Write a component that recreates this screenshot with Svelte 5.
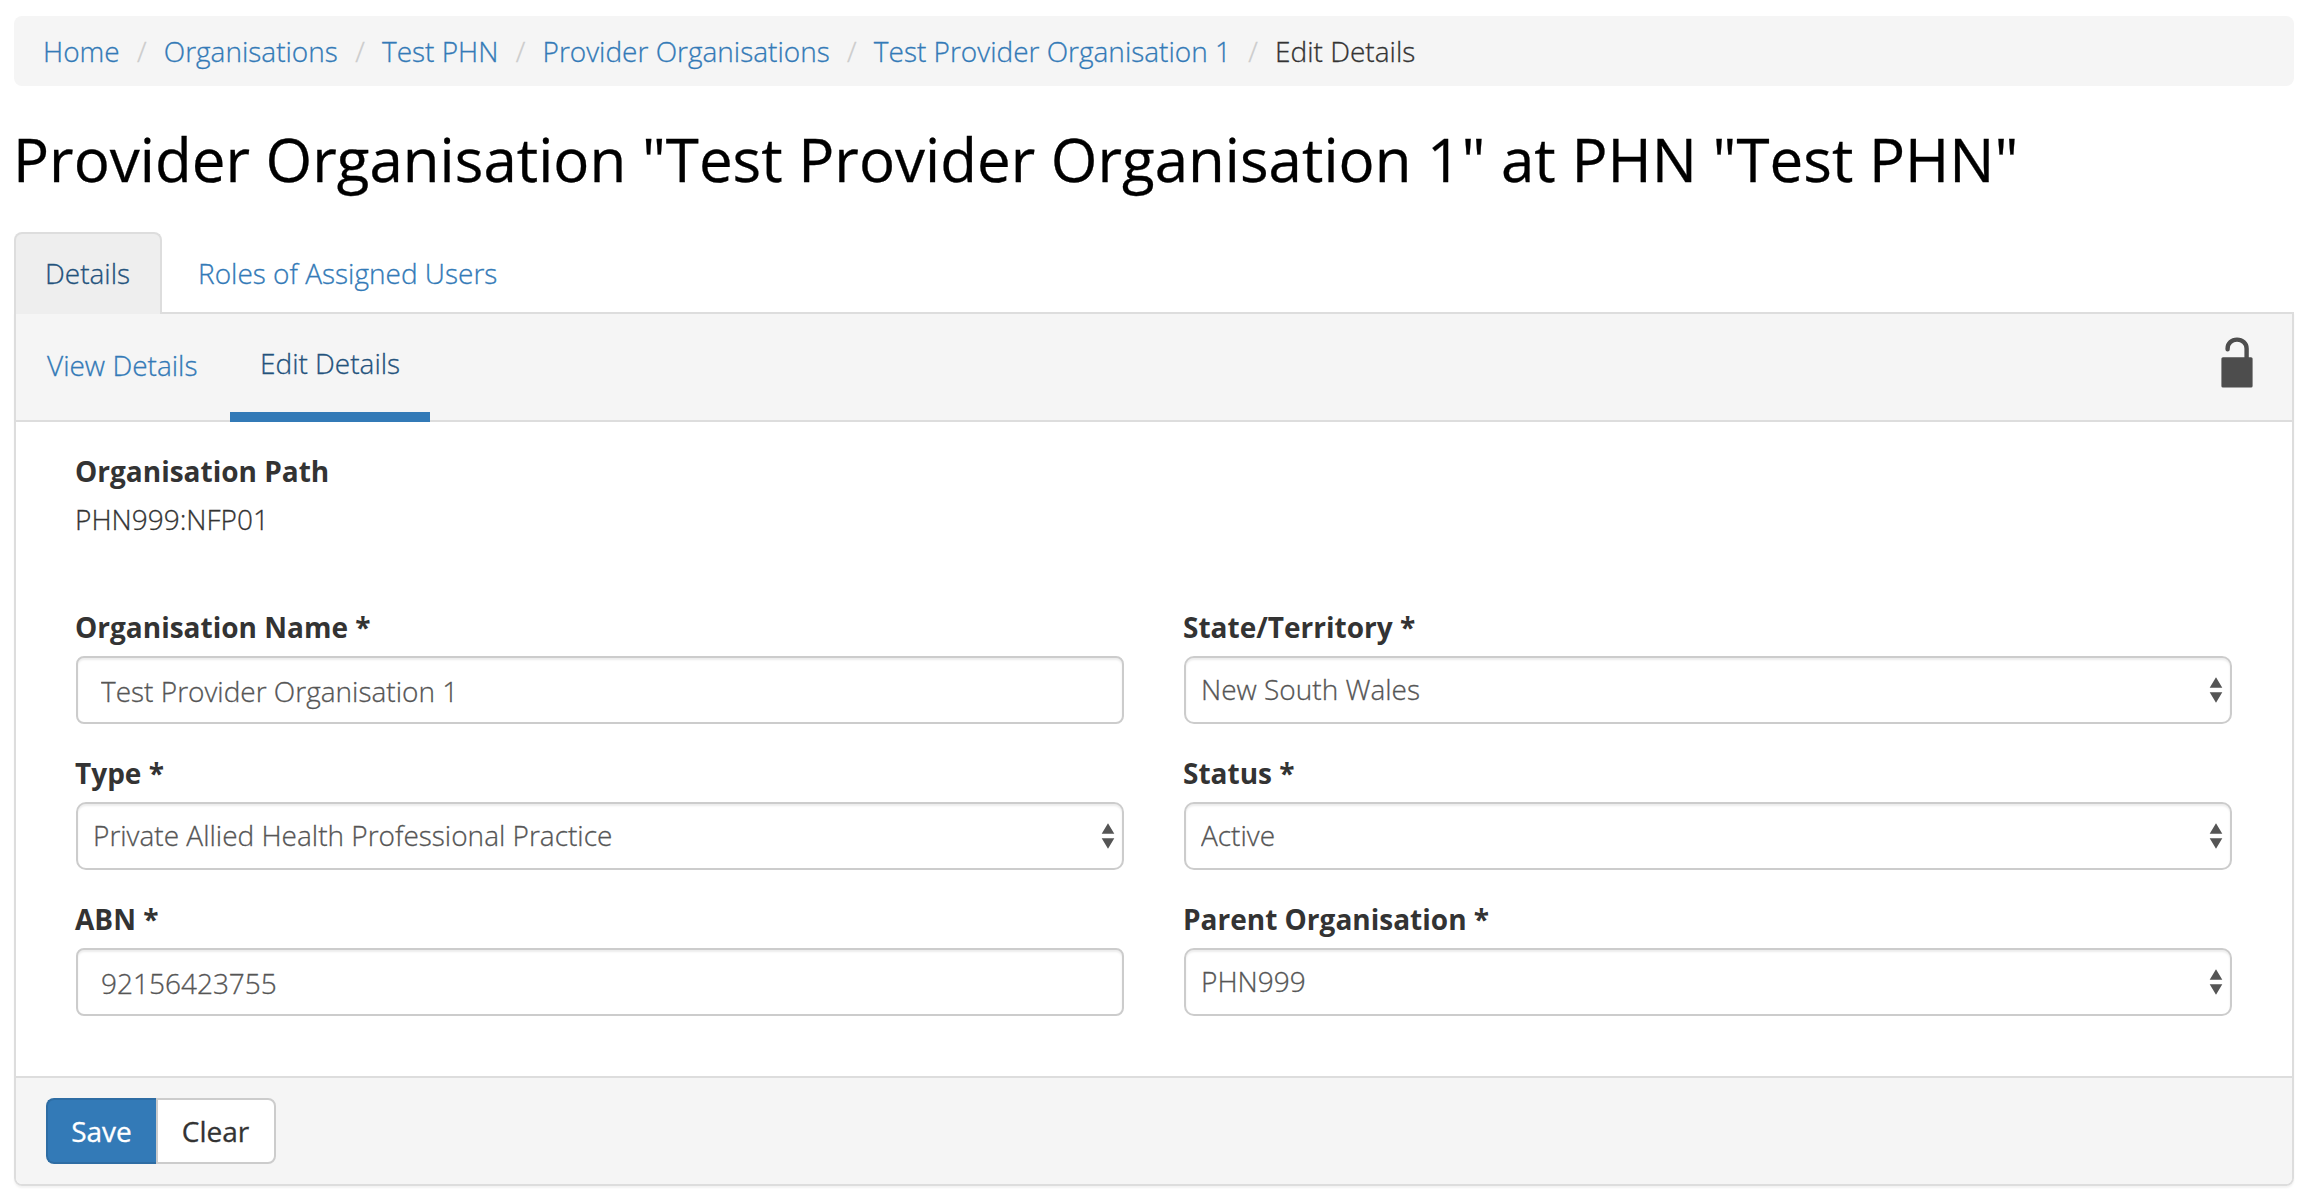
<script>
  const crumbs = ['Home', 'Organisations', 'Test PHN', 'Provider Organisations', 'Test Provider Organisation 1'];

  const fields = [
    { id: 'name', label: 'Organisation Name', kind: 'text', value: 'Test Provider Organisation 1' },
    { id: 'state', label: 'State/Territory', kind: 'select', value: 'New South Wales' },
    { id: 'type', label: 'Type', kind: 'select', value: 'Private Allied Health Professional Practice' },
    { id: 'status', label: 'Status', kind: 'select', value: 'Active' },
    { id: 'abn', label: 'ABN', kind: 'text', value: '92156423755' },
    { id: 'parent', label: 'Parent Organisation', kind: 'select', value: 'PHN999' }
  ];
</script>

<div class="page">
  <nav class="breadcrumb" aria-label="Breadcrumb">
    {#each crumbs as crumb}
      <a href="#top">{crumb}</a><span class="slash">/</span>
    {/each}
    <span class="current">Edit Details</span>
  </nav>

  <h1>Provider Organisation "Test Provider Organisation 1" at PHN "Test PHN"</h1>

  <div class="tabs">
    <a class="tab active" href="#details">Details</a>
    <a class="tab" href="#roles">Roles of Assigned Users</a>
  </div>

  <section class="panel">
    <header class="panel-head">
      <a class="sub view" href="#view">View Details</a>
      <a class="sub edit" href="#edit">Edit Details</a>
      <svg class="lock" viewBox="0 0 32 52" width="32" height="52" aria-label="Unlocked">
        <path d="M6.6 13.2V12.4C6.6 7.4 10.6 3.6 16 3.6S25.6 7.4 25.6 12.4V22" fill="none" stroke="#4d4d4d" stroke-width="4.4" stroke-linecap="round" />
        <rect x="0.4" y="21.2" width="31.2" height="30.4" rx="1.6" fill="#4d4d4d" />
      </svg>
    </header>

    <form class="body">
      <div class="path-label">Organisation Path</div>
      <div class="path-value">PHN999:NFP01</div>

      <div class="grid">
        {#each fields as field}
          <div class="field">
            <label for={field.id}>{field.label} *</label>
            {#if field.kind === 'text'}
              <input id={field.id} type="text" value={field.value} />
            {:else}
              <div class="select-wrap">
                <select id={field.id}>
                  <option>{field.value}</option>
                </select>
                <svg class="arrows" viewBox="0 0 14 26" width="14" height="26">
                  <path d="M7 0.2L13.3 10.8H0.7ZM7 25.8L13.3 15.2H0.7Z" fill="#555" />
                </svg>
              </div>
            {/if}
          </div>
        {/each}
      </div>
    </form>

    <footer class="panel-foot">
      <button class="save" type="button">Save</button>
      <button class="clear" type="button">Clear</button>
    </footer>
  </section>
</div>

<style>
  :global(body) {
    margin: 0;
    background: #fff;
  }

  .page {
    box-sizing: border-box;
    height: 1204px;
    padding: 16px 16px 0 14px;
    font-family: 'Open Sans', sans-serif;
    font-size: 28px;
    font-weight: 300;
    line-height: 38px;
    color: #333;
    -webkit-text-stroke-width: 0.3px;
  }

  .page * {
    box-sizing: border-box;
  }

  a {
    color: #337ab7;
    text-decoration: none;
  }

  .breadcrumb {
    display: flex;
    height: 70px;
    padding: 16px 29px;
    border-radius: 8px;
    background: #f5f5f5;
    white-space: nowrap;
  }

  .slash {
    width: 44.1px;
    text-align: center;
    color: #ccc;
  }

  h1 {
    height: 66px;
    margin: 40px 0 40px -1px;
    font-size: 60px;
    font-weight: 400;
    line-height: 66px;
    letter-spacing: 0.025px;
    color: #000;
    white-space: nowrap;
  }

  .tabs {
    display: flex;
    gap: 4px;
    height: 80px;
  }

  .tab {
    height: 80px;
    padding: 22px 30px 0 32px;
    white-space: nowrap;
  }

  .tab.active {
    position: relative;
    width: 148px;
    height: 82px;
    padding: 20px 0 0 29px;
    border: 2px solid #ddd;
    border-bottom: 0;
    border-radius: 8px 8px 0 0;
    background: #eee;
    color: #23527c;
  }

  .panel {
    border: 2px solid #ddd;
    border-radius: 0 0 8px 8px;
    box-shadow: 0 2px 2px rgba(0, 0, 0, 0.05);
    height: 874px;
    overflow: hidden;
  }

  .panel-head {
    display: flex;
    height: 108px;
    border-bottom: 2px solid #ddd;
    background: #f5f5f5;
  }

  .sub {
    height: 108px;
    padding: 32px 30px 0;
    white-space: nowrap;
  }

  .sub.view {
    width: 214px;
    padding-left: 31px;
  }

  .sub.edit {
    width: 200px;
    padding-top: 30px;
    border-bottom: 10px solid #337ab7;
    color: #23527c;
  }

  .lock {
    margin: 22px 39px 0 auto;
  }

  .body {
    height: 654px;
    padding: 30px 60px 0;
  }

  .path-label,
  label {
    display: block;
    margin-left: -1px;
    font-weight: 700;
    white-space: nowrap;
    -webkit-text-stroke-width: 0;
  }

  .path-value {
    margin: 10px 0 0 -1px;
  }

  .grid {
    display: grid;
    grid-template-columns: 1fr 1fr;
    gap: 30px 60px;
    margin-top: 70px;
  }

  label {
    margin-bottom: 10px;
  }

  input,
  select {
    display: block;
    width: 100%;
    height: 68px;
    margin: 0;
    border: 2px solid #ccc;
    border-radius: 8px;
    outline: 0;
    background: #fff;
    box-shadow: inset 0 2px 2px rgba(0, 0, 0, 0.075);
    font: inherit;
    color: #555;
  }

  input {
    padding: 2px 23px 0;
  }

  select {
    padding: 0 15px 2px;
    border-radius: 10px;
    appearance: none;
  }

  .select-wrap {
    position: relative;
  }

  .arrows {
    position: absolute;
    top: 21px;
    right: 9px;
    pointer-events: none;
  }

  .panel-foot {
    display: flex;
    height: 110px;
    padding: 20px 30px;
    border-top: 2px solid #ddd;
    background: #f5f5f5;
  }

  button {
    height: 66px;
    padding: 0;
    font: inherit;
    font-weight: 400;
  }

  .save {
    width: 110px;
    padding-right: 1px;
    border: 2px solid #2e6da4;
    border-right: 0;
    border-radius: 8px 0 0 8px;
    background: #337ab7;
    color: #fff;
  }

  .clear {
    width: 120px;
    padding-right: 1px;
    border: 2px solid #ccc;
    border-radius: 0 8px 8px 0;
    background: #fff;
    color: #333;
  }
</style>
